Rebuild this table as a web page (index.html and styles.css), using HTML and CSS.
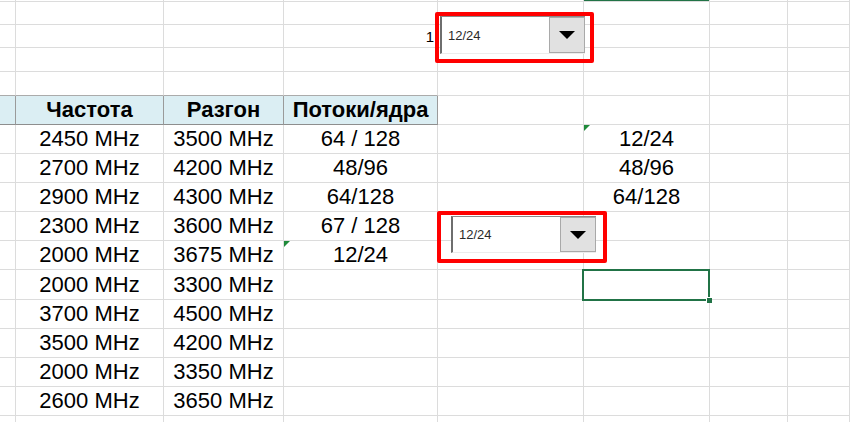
FILE: index.html
```html
<!DOCTYPE html>
<html lang="ru">
<head>
<meta charset="utf-8">
<title>Sheet</title>
<link rel="stylesheet" href="styles.css">
</head>
<body>
<div class="sheet">
  <div class="row r0"><div class="c"></div><div class="c"></div><div class="c"></div><div class="c"></div><div class="c"></div><div class="c sel-top"></div><div class="c"></div><div class="c"></div></div>
  <div class="row r23"><div class="c"></div><div class="c"></div><div class="c"></div><div class="c"></div><div class="c"></div><div class="c"></div><div class="c"></div><div class="c"></div></div>
  <div class="row r23"><div class="c"></div><div class="c"></div><div class="c"></div><div class="c small right">1</div><div class="c"></div><div class="c"></div><div class="c"></div><div class="c"></div></div>
  <div class="row r24"><div class="c"></div><div class="c"></div><div class="c"></div><div class="c"></div><div class="c"></div><div class="c"></div><div class="c"></div><div class="c"></div></div>
  <div class="row r24"><div class="c ht"></div><div class="c ht"></div><div class="c ht"></div><div class="c ht"></div><div class="c"></div><div class="c"></div><div class="c"></div><div class="c"></div></div>
  <div class="row"><div class="c h"></div><div class="c h">Частота</div><div class="c h">Разгон</div><div class="c h">Потоки/ядра</div><div class="c"></div><div class="c"></div><div class="c"></div><div class="c"></div></div>
  <div class="row"><div class="c"></div><div class="c">2450 MHz</div><div class="c">3500 MHz</div><div class="c">64 / 128</div><div class="c"></div><div class="c tri">12/24</div><div class="c"></div><div class="c"></div></div>
  <div class="row"><div class="c"></div><div class="c">2700 MHz</div><div class="c">4200 MHz</div><div class="c">48/96</div><div class="c"></div><div class="c">48/96</div><div class="c"></div><div class="c"></div></div>
  <div class="row"><div class="c"></div><div class="c">2900 MHz</div><div class="c">4300 MHz</div><div class="c">64/128</div><div class="c"></div><div class="c">64/128</div><div class="c"></div><div class="c"></div></div>
  <div class="row"><div class="c"></div><div class="c">2300 MHz</div><div class="c">3600 MHz</div><div class="c">67 / 128</div><div class="c"></div><div class="c"></div><div class="c"></div><div class="c"></div></div>
  <div class="row"><div class="c"></div><div class="c">2000 MHz</div><div class="c">3675 MHz</div><div class="c tri">12/24</div><div class="c"></div><div class="c"></div><div class="c"></div><div class="c"></div></div>
  <div class="row r30"><div class="c"></div><div class="c">2000 MHz</div><div class="c">3300 MHz</div><div class="c"></div><div class="c"></div><div class="c"></div><div class="c"></div><div class="c"></div></div>
  <div class="row"><div class="c"></div><div class="c">3700 MHz</div><div class="c">4500 MHz</div><div class="c"></div><div class="c"></div><div class="c"></div><div class="c"></div><div class="c"></div></div>
  <div class="row"><div class="c"></div><div class="c">3500 MHz</div><div class="c">4200 MHz</div><div class="c"></div><div class="c"></div><div class="c"></div><div class="c"></div><div class="c"></div></div>
  <div class="row"><div class="c"></div><div class="c">2000 MHz</div><div class="c">3350 MHz</div><div class="c"></div><div class="c"></div><div class="c"></div><div class="c"></div><div class="c"></div></div>
  <div class="row"><div class="c"></div><div class="c">2600 MHz</div><div class="c">3650 MHz</div><div class="c"></div><div class="c"></div><div class="c"></div><div class="c"></div><div class="c"></div></div>
  <div class="row"><div class="c"></div><div class="c"></div><div class="c"></div><div class="c"></div><div class="c"></div><div class="c"></div><div class="c"></div><div class="c"></div></div>

  <div class="mark mark-1">
    <div class="combo">
      <span class="combo-text">12/24</span>
      <span class="combo-btn"><span class="arrow"></span></span>
    </div>
  </div>
  <div class="mark mark-2">
    <div class="combo">
      <span class="combo-text">12/24</span>
      <span class="combo-btn"><span class="arrow"></span></span>
    </div>
  </div>
  <div class="selection"><span class="handle"></span></div>
</div>
</body>
</html>
```

FILE: styles.css
```css
html, body {
  margin: 0;
  padding: 0;
  background: #ffffff;
  overflow: hidden;
}

.sheet {
  position: relative;
  width: 850px;
  height: 422px;
  overflow: hidden;
  font-family: "Liberation Sans", Arial, sans-serif;
  color: #000;
}

.row {
  display: grid;
  grid-template-columns: 16px 148px 120px 154px 146px 126px 78px 1fr;
  height: 29px;
}
.row.r0 { height: 2px; }
.row.r23 { height: 23px; }
.row.r24 { height: 24px; }
.row.r30 { height: 30px; }

.c {
  box-sizing: border-box;
  border-right: 1px solid #dcdcdc;
  border-bottom: 1px solid #dcdcdc;
  display: flex;
  align-items: center;
  justify-content: center;
  font-size: 22px;
  white-space: nowrap;
  overflow: visible;
}

.c.small {
  font-size: 15px;
}
.c.right {
  justify-content: flex-end;
  padding-right: 3px;
}

.c.ht {
  border-bottom-color: #ababab;
}

.c.h {
  background: #dbeef3;
  font-weight: bold;
  border-right-color: #9a9a9a;
  border-bottom-color: #8e8e8e;
}

.c.sel-top {
  background: #217346;
}

.c.tri {
  position: relative;
}
.c.tri::before {
  content: "";
  position: absolute;
  left: 0;
  top: 0;
  border-top: 6px solid #1f8a3a;
  border-right: 6px solid transparent;
}

/* annotation boxes with form combo boxes */
.mark {
  position: absolute;
  box-sizing: border-box;
  border: 4px solid #ff0000;
  border-radius: 2px;
}
.mark-1 {
  left: 435px;
  top: 12px;
  width: 159px;
  height: 51px;
  padding: 0 5px 5px 1px;
}
.mark-2 {
  left: 437px;
  top: 211px;
  width: 170px;
  height: 52px;
  padding: 1px 7px 6px 10px;
}

.combo {
  display: flex;
  height: 100%;
  box-sizing: border-box;
  background: #fff;
  border-top: 1px solid #8a8a8a;
  border-left: 2px solid #6e6e6e;
  border-bottom: 1px solid #ececec;
}
.combo-text {
  flex: 1;
  display: flex;
  align-items: center;
  padding-left: 6px;
  font-size: 13px;
  color: #2a2a2a;
}
.combo-btn {
  width: 36px;
  box-sizing: border-box;
  background: #e1e1e1;
  border: 1px solid #a9a9a9;
  display: flex;
  align-items: center;
  justify-content: center;
}
.arrow {
  width: 0;
  height: 0;
  border-left: 8px solid transparent;
  border-right: 8px solid transparent;
  border-top: 8px solid #000;
}

.selection {
  position: absolute;
  left: 582px;
  top: 269px;
  width: 128px;
  height: 32px;
  box-sizing: border-box;
  border: 2px solid #217346;
}
.handle {
  position: absolute;
  right: -4px;
  bottom: -4px;
  width: 5px;
  height: 5px;
  background: #217346;
  border: 1px solid #fff;
  border-right: none;
  border-bottom: none;
}
```
